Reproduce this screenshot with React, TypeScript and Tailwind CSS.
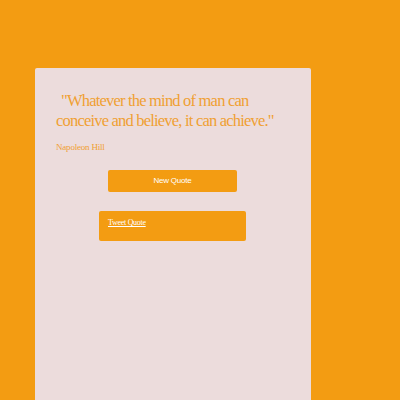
export default function App() {
  return (
    <div className="h-[400px] w-[400px] overflow-hidden bg-[#f39c12]">
      <div className="ml-[35px] mt-[68px] h-[340px] w-[276px] rounded-[2px] bg-[#ecdcdc] pl-[21px] pr-[12px] pt-[23px]">
        <p className="indent-[5px] font-['Liberation_Serif',serif] text-[16.5px] leading-[20px] tracking-[-0.8px] text-[#f0a033]">
          "Whatever the mind of man can conceive and believe, it can achieve."
        </p>
        <p className="mt-[10px] font-['Liberation_Serif',serif] text-[9px] leading-[12px] tracking-[-0.2px] text-[#f0a033]">
          Napoleon Hill
        </p>
        <button className="mt-[17px] ml-[52px] block h-[22px] w-[129px] rounded-[2px] bg-[#f39c12] font-['Liberation_Sans',sans-serif] text-[8px] tracking-[-0.2px] text-white">
          New Quote
        </button>
        <div className="mt-[19px] ml-[43px] h-[30px] w-[147px] rounded-[2px] bg-[#f39c12] px-[9px] pt-[3px] leading-[10px]">
          <a className="font-['Liberation_Serif',serif] text-[8px] tracking-[-0.3px] text-white underline">Tweet Quote</a>
        </div>
      </div>
    </div>
  );
}
